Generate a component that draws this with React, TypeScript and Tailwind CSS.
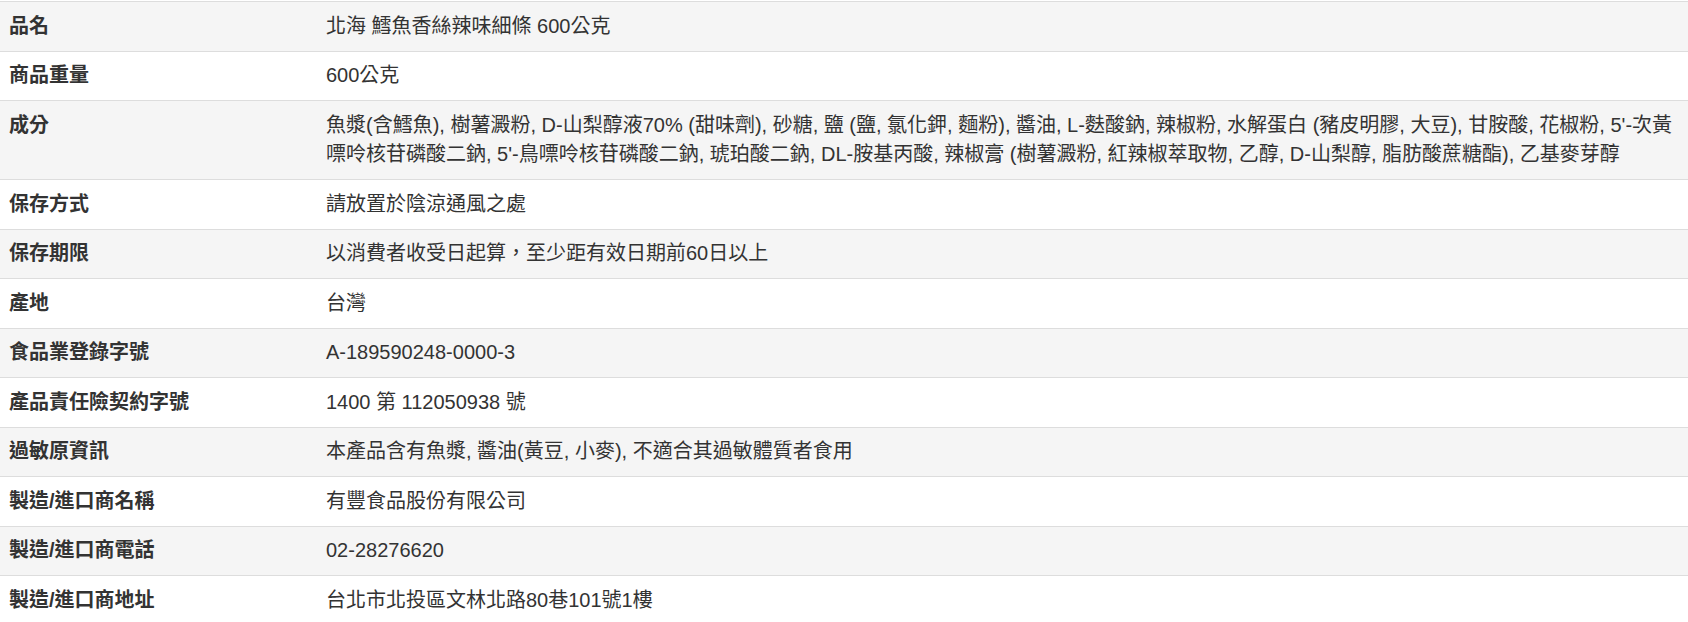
const rows: [string, string][] = [
  ['品名', '北海 鱈魚香絲辣味細條 600公克'],
  ['商品重量', '600公克'],
  [
    '成分',
    "魚漿(含鱈魚), 樹薯澱粉, D-山梨醇液70% (甜味劑), 砂糖, 鹽 (鹽, 氯化鉀, 麵粉), 醬油, L-麩酸鈉, 辣椒粉, 水解蛋白 (豬皮明膠, 大豆), 甘胺酸, 花椒粉, 5'-次黃嘌呤核苷磷酸二鈉, 5'-鳥嘌呤核苷磷酸二鈉, 琥珀酸二鈉, DL-胺基丙酸, 辣椒膏 (樹薯澱粉, 紅辣椒萃取物, 乙醇, D-山梨醇, 脂肪酸蔗糖酯), 乙基麥芽醇",
  ],
  ['保存方式', '請放置於陰涼通風之處'],
  ['保存期限', '以消費者收受日起算，至少距有效日期前60日以上'],
  ['產地', '台灣'],
  ['食品業登錄字號', 'A-189590248-0000-3'],
  ['產品責任險契約字號', '1400 第 112050938 號'],
  ['過敏原資訊', '本產品含有魚漿, 醬油(黃豆, 小麥), 不適合其過敏體質者食用'],
  ['製造/進口商名稱', '有豐食品股份有限公司'],
  ['製造/進口商電話', '02-28276620'],
  ['製造/進口商地址', '台北市北投區文林北路80巷101號1樓'],
]

export default function App() {
  return (
    <main className="min-h-screen bg-white pt-px font-['Liberation_Sans','Noto_Sans_CJK_TC',sans-serif] text-[20px] text-[#333]">
      <table className="w-full border-collapse">
        <tbody>
          {rows.map(([label, value], i) => (
            <tr key={label} className={i % 2 === 0 ? 'bg-[#f5f5f5]' : 'bg-white'}>
              <td className="w-[326px] border-t border-[#ddd] py-[9.5px] pl-[9px] align-top font-bold leading-[29.5px]">{label}</td>
              <td className="border-t border-[#ddd] py-[9.5px] pr-[10px] align-top leading-[29.5px]">{value}</td>
            </tr>
          ))}
        </tbody>
      </table>
    </main>
  )
}
